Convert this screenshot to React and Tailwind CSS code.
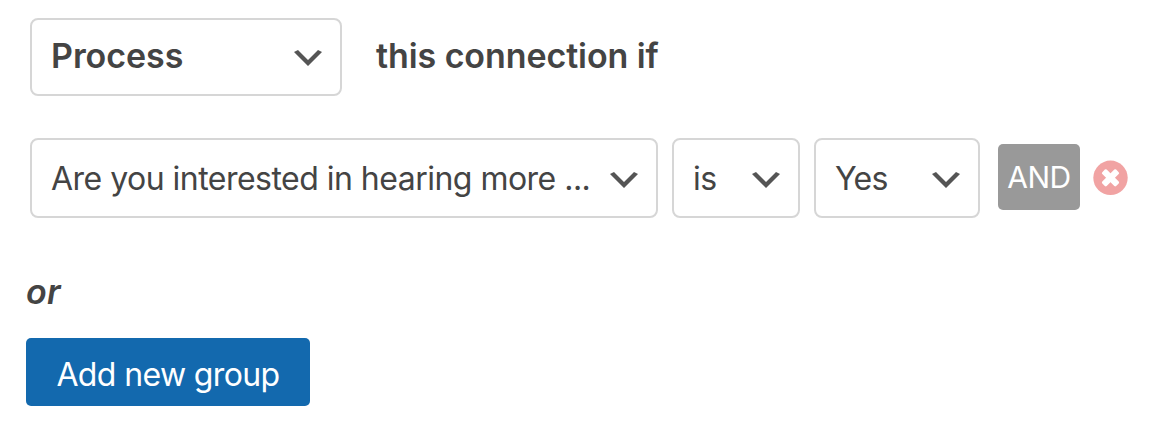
import React from "react";

function Chevron({ className = "" }) {
  return (
    <svg className={`h-10 w-10 shrink-0 ${className}`} viewBox="0 0 20 20" fill="#555555">
      <path d="M5 6l5 5 5-5 2 1-7 7-7-7 2-1z" />
    </svg>
  );
}

function Select({ children, className, iconClassName }) {
  return (
    <button
      type="button"
      className={`flex shrink-0 items-center justify-between rounded-lg border-2 border-[#d6d6d6] bg-white pr-3 pl-[19px] whitespace-nowrap ${className}`}
    >
      {children}
      <Chevron className={iconClassName} />
    </button>
  );
}

export default function App() {
  return (
    <div
      className="h-[442px] w-[1156px] overflow-hidden bg-white pt-[18px] text-[32px] leading-10 text-[#444444]"
      style={{ fontFamily: "Inter, sans-serif" }}
    >
      {/* Action row */}
      <div className="flex items-center pl-[30px] text-[34px] font-semibold">
        <Select className="h-[78px] w-[312px]" iconClassName="mt-0.5">
          <span className="-mt-0.5 tracking-[-0.05px]">Process</span>
        </Select>
        <span className="-mt-0.5 ml-[34px] tracking-[-0.08px] whitespace-nowrap">this connection if</span>
      </div>

      {/* Condition row */}
      <div className="mt-[42px] flex items-center pl-[30px]">
        <Select className="h-20 w-[628px]" iconClassName="mt-[3px]">
          <span className="mt-0.5 tracking-[-0.52px]">Are you interested in hearing more ...</span>
        </Select>
        <Select className="ml-[14px] h-20 w-32" iconClassName="mt-[3px]">
          <span className="mt-0.5 tracking-[-0.5px]">is</span>
        </Select>
        <Select className="ml-[14px] h-20 w-[166px]" iconClassName="mt-[3px]">
          <span className="mt-0.5 tracking-[-0.7px]">Yes</span>
        </Select>
        <button
          type="button"
          className="-mt-0.5 ml-[18px] flex h-[66px] w-[82px] shrink-0 items-center justify-center rounded-[5px] bg-[#999999] text-[30px] tracking-[-0.5px] text-white"
        >
          AND
        </button>
        <button type="button" aria-label="Remove" className="-mt-px ml-[13px] h-[35px] w-[35px] shrink-0">
          <svg className="h-full w-full" viewBox="0 0 35 35">
            <circle cx="17.5" cy="17.8" r="17.2" fill="#f1a3a3" />
            <g fill="#ffffff" transform="rotate(45 17.5 17.8)">
              <rect x="7.7" y="14.7" width="19.6" height="6.2" rx="1.3" />
              <rect x="14.4" y="8" width="6.2" height="19.6" rx="1.3" />
            </g>
          </svg>
        </button>
      </div>

      {/* Group separator */}
      <div className="mt-[54px] pl-[26px] text-[34px] font-semibold tracking-[0.3px] italic">or</div>

      <button
        type="button"
        className="mt-[26px] ml-[26px] flex h-[68px] w-[284px] items-center justify-center rounded-[5px] bg-[#1369ae] pt-1.5 whitespace-nowrap text-white"
      >
        <span className="tracking-[-0.62px]">Add new group</span>
      </button>
    </div>
  );
}
